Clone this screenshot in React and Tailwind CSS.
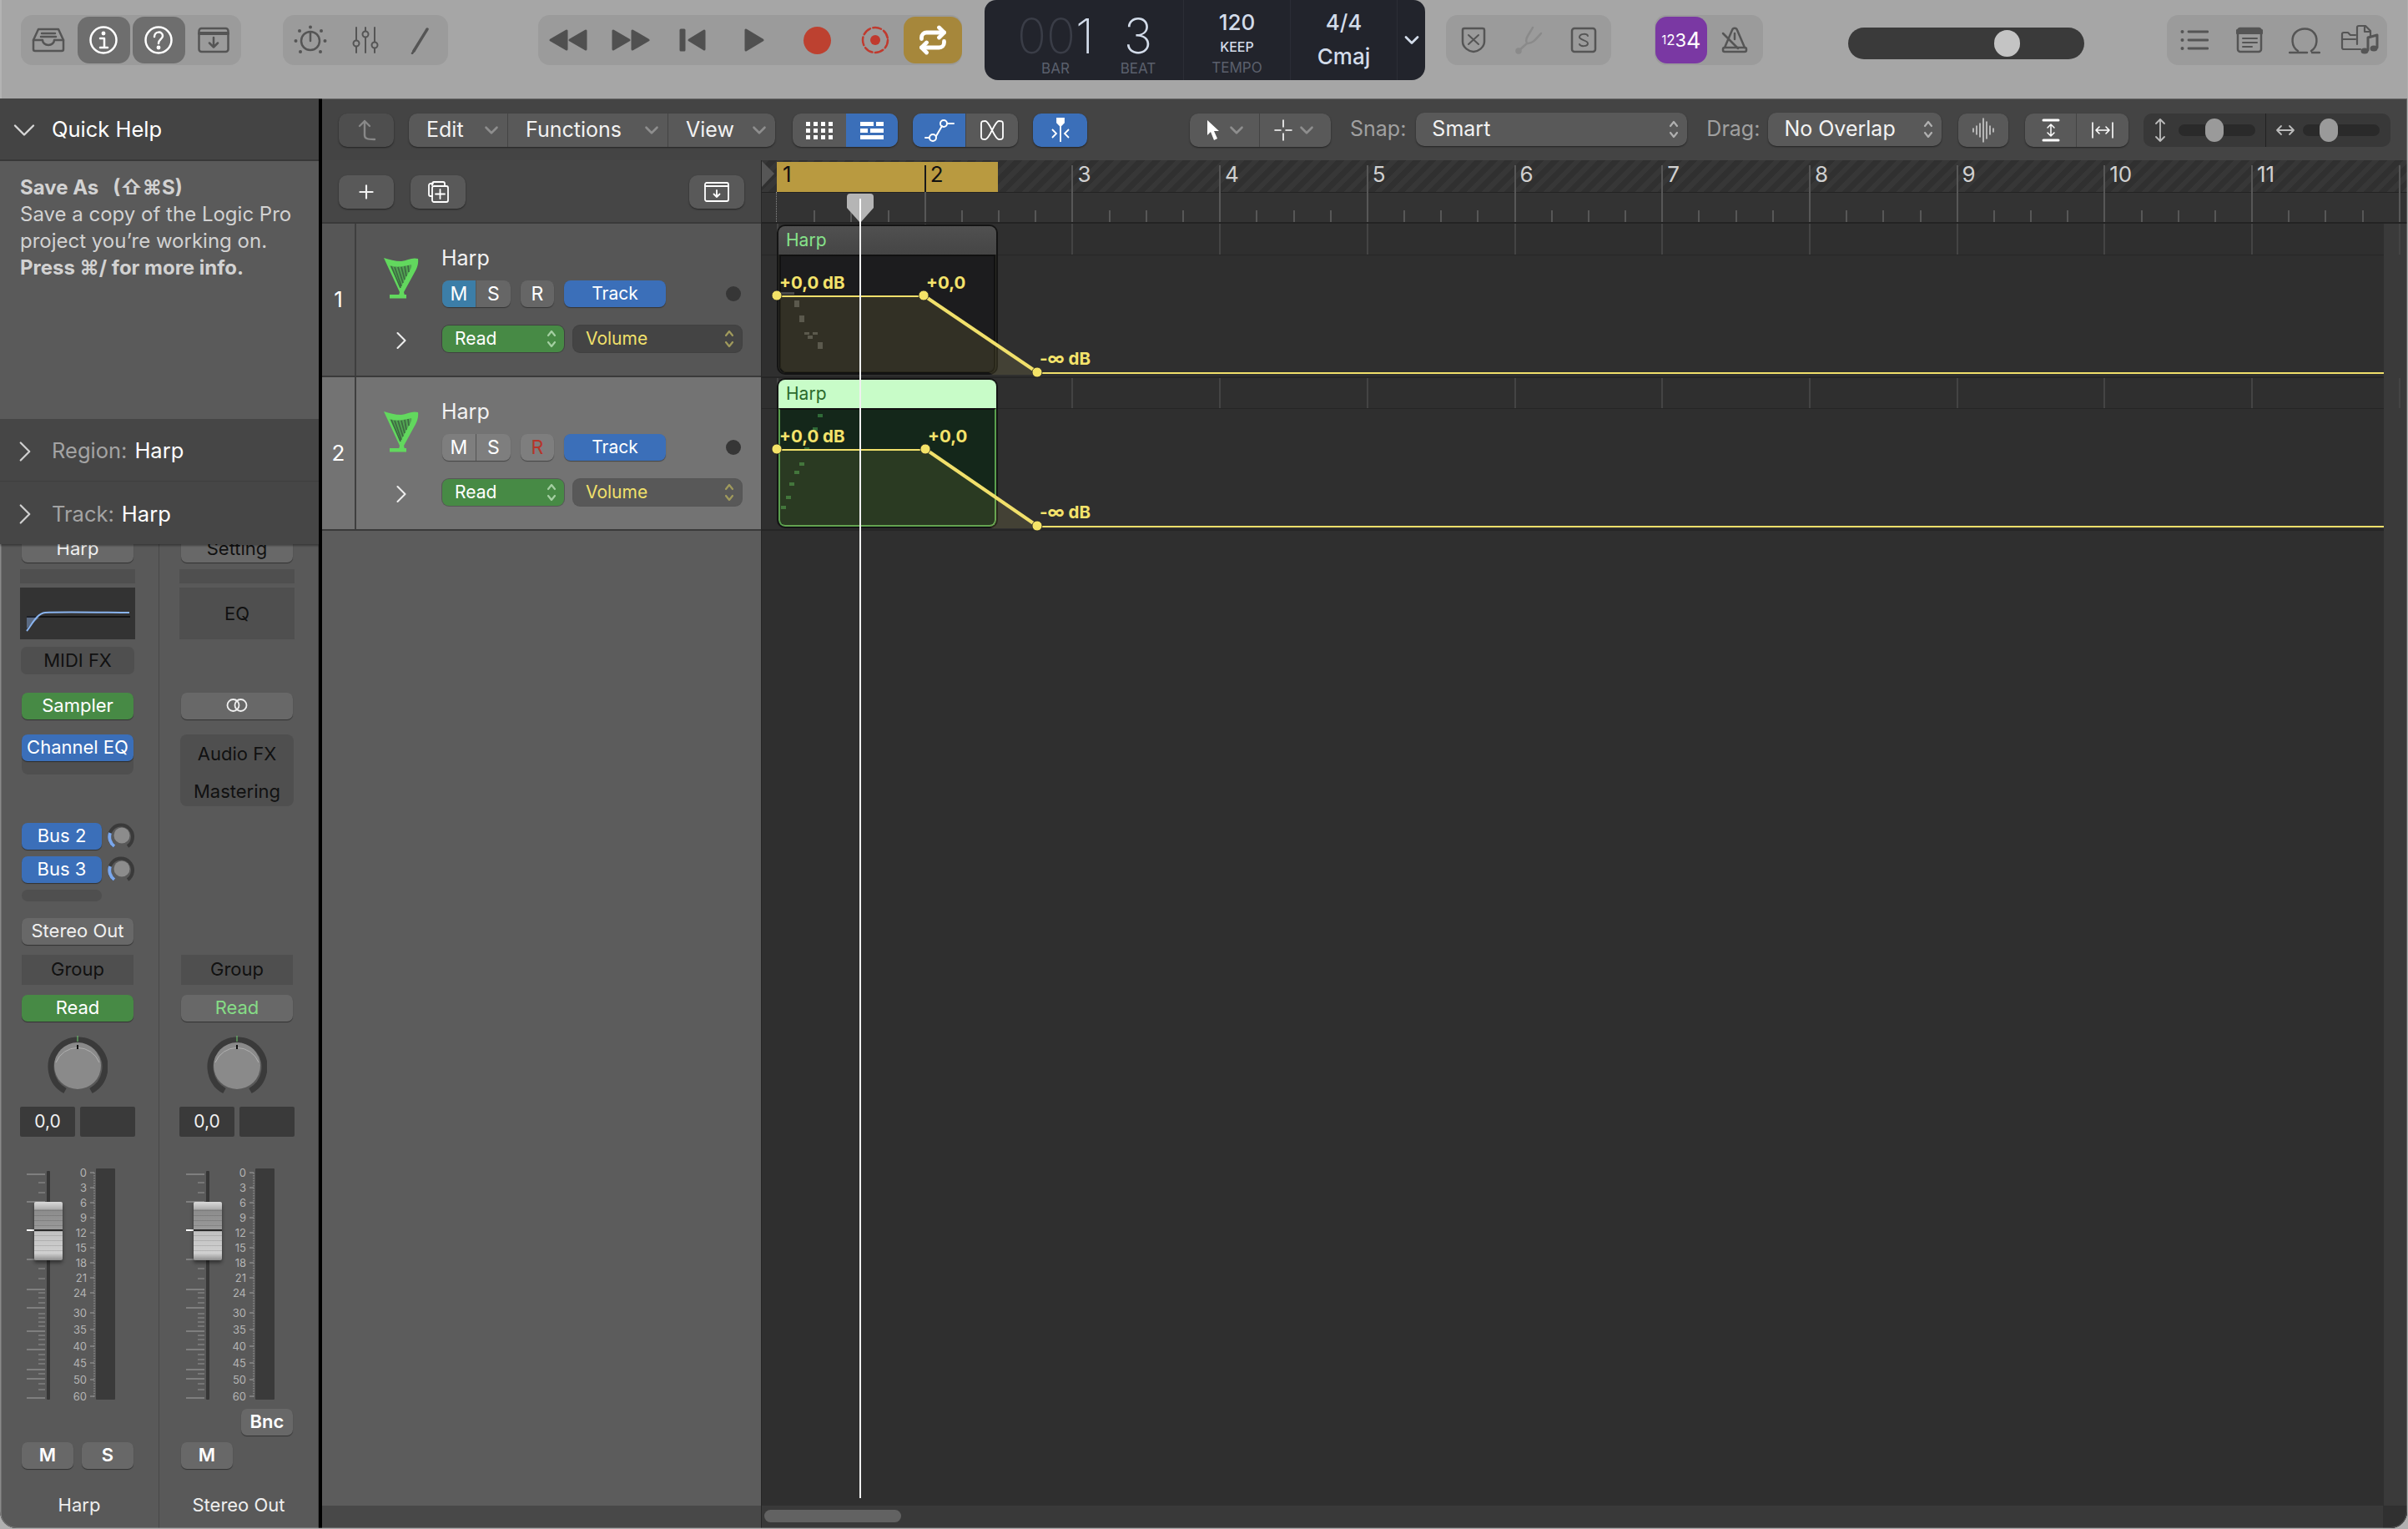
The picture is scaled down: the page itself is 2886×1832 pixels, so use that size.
import React from "react";
import { ChevronDown, ChevronRight, Plus, Repeat } from "lucide-react";

// Bar lines on the timeline, in page pixels
const BAR_X = (n) => 931 + (n - 1) * 176.7;
const BARS = [1, 2, 3, 4, 5, 6, 7, 8, 9, 10, 11, 12];
const DB_MARKS = [
  ["0", 5], ["3", 23], ["6", 41], ["9", 59], ["12", 77], ["15", 95], ["18", 113], ["21", 131],
  ["24", 149], ["30", 173], ["35", 193], ["40", 213], ["45", 233], ["50", 253], ["60", 273],
];
const FADER_LONG = [7, 40, 109, 145, 167, 195, 217, 241, 252, 275];
const FADER_SHORT = [17, 29, 120, 132, 149, 155, 161, 174, 179, 184, 189, 200, 205, 211, 223, 229, 234, 246, 258, 265];

function Ico({ w = 36, h = 32, vb, children, color = "#555", sw = 2.5 }) {
  return (
    <svg width={w} height={h} viewBox={vb || `0 0 ${w} ${h}`} fill="none" stroke={color} strokeWidth={sw} strokeLinecap="round" strokeLinejoin="round">
      {children}
    </svg>
  );
}

function Group({ className, children }) {
  return <div className={`flex h-[60px] items-center rounded-[14px] bg-[#9b9b9b] ${className}`}>{children}</div>;
}

function TopBtn({ active, children, className = "w-[66px]" }) {
  return (
    <div className={`flex h-[60px] items-center justify-center ${className}`}>
      <div className={`flex h-[56px] w-[63px] items-center justify-center rounded-[14px] ${active ? "bg-[#6e6e6e]" : ""}`}>{children}</div>
    </div>
  );
}

function TitleBar() {
  return (
    <div className="flex h-[118px] shrink-0 bg-[#a6a6a6] pt-[18px]">
      <Group className="ml-[25px] w-[264px]">
        <TopBtn>
          <Ico w={40} h={32}>
            <path d="M8 3H32L38 16V27a2 2 0 0 1-2 2H4a2 2 0 0 1-2-2V16Z" />
            <path d="M2 16H13a7 6 0 0 0 14 0H38M12 8H28M11 12H29" />
          </Ico>
        </TopBtn>
        <TopBtn active>
          <Ico w={36} h={36} color="#fff">
            <circle cx="18" cy="18" r="15.5" />
            <path d="M14 16H19V27M14 27H23" />
            <circle cx="18" cy="10" r="1.2" fill="#fff" />
          </Ico>
        </TopBtn>
        <TopBtn active>
          <Ico w={36} h={36} color="#fff">
            <circle cx="18" cy="18" r="15.5" />
            <path d="M13 14c0-7 10-7 10-1 0 4-5 4-5 9" />
            <circle cx="18" cy="27" r="1.2" fill="#fff" />
          </Ico>
        </TopBtn>
        <TopBtn>
          <Ico w={38} h={32}>
            <rect x="1.5" y="2" width="35" height="28" rx="3" />
            <path d="M2 8H36" strokeWidth="4" />
            <path d="M19 13V24M14 19.5L19 24.5L24 19.5" />
          </Ico>
        </TopBtn>
      </Group>
      <Group className="ml-[50px] w-[198px]">
        <TopBtn>
          <Ico w={40} h={36}>
            <circle cx="20" cy="19" r="11" />
            <path d="M20 19V10" />
            <g fill="#555" stroke="none">
              <circle cx="20" cy="2.5" r="2" /><circle cx="7" cy="7" r="2" /><circle cx="33" cy="7" r="2" />
              <circle cx="2.5" cy="19" r="2" /><circle cx="37.5" cy="19" r="2" /><circle cx="8" cy="32" r="2" /><circle cx="32" cy="32" r="2" />
            </g>
          </Ico>
        </TopBtn>
        <TopBtn>
          <Ico w={32} h={34} sw={2}>
            <path d="M5 2V17M5 25V32M16 2V6M16 14V32M27 2V19M27 27V32" />
            <circle cx="5" cy="21" r="3.5" /><circle cx="16" cy="10" r="3.5" /><circle cx="27" cy="23" r="3.5" />
          </Ico>
        </TopBtn>
        <TopBtn>
          <Ico w={28} h={34} sw={2.5}>
            <path d="M22 4L6 30" strokeWidth="3.5" />
            <path d="M6 30L4 33" />
          </Ico>
        </TopBtn>
      </Group>
      <Group className="ml-[108px] w-[508px]">
        <TopBtn className="w-[71px]">
          <svg width="48" height="28" viewBox="0 0 48 28" fill="#505050" stroke="#505050" strokeWidth="3" strokeLinejoin="round"><path d="M22 3V25L3 14Z" /><path d="M45 3V25L26 14Z" /></svg>
        </TopBtn>
        <TopBtn className="w-[80px]">
          <svg width="48" height="28" viewBox="0 0 48 28" fill="#505050" stroke="#505050" strokeWidth="3" strokeLinejoin="round"><path d="M3 3V25L22 14Z" /><path d="M26 3V25L45 14Z" /></svg>
        </TopBtn>
        <TopBtn className="w-[68px]">
          <svg width="34" height="28" viewBox="0 0 34 28" fill="#505050" stroke="#505050" strokeWidth="3" strokeLinejoin="round"><path d="M31 3V25L13 14Z" /><path d="M3 2H7V26H3Z" /></svg>
        </TopBtn>
        <TopBtn className="w-[79px]">
          <svg width="26" height="30" viewBox="0 0 26 30" fill="#505050" stroke="#505050" strokeWidth="3" strokeLinejoin="round"><path d="M3 3V27L23 15Z" /></svg>
        </TopBtn>
        <TopBtn className="w-[72px]">
          <div className="h-[33px] w-[33px] rounded-full bg-[#bd4130]" />
        </TopBtn>
        <TopBtn className="w-[68px]">
          <Ico w={34} h={34} color="#c03a2e" sw={2.5}>
            <circle cx="17" cy="17" r="15" strokeDasharray="10 3.5" />
            <circle cx="17" cy="17" r="6" fill="#c03a2e" stroke="none" />
          </Ico>
        </TopBtn>
        <div className="flex h-[56px] w-[70px] items-center justify-center rounded-[14px] bg-[#a6873b]">
          <Repeat size={36} color="#fff" strokeWidth={3.2} />
        </div>
      </Group>
      <Lcd />
      <Group className="ml-[25px] w-[198px]">
        <TopBtn>
          <Ico w={30} h={32}>
            <path d="M2 4a2 2 0 0 1 2-2H26a2 2 0 0 1 2 2V18C28 25 20 30 15 30S2 25 2 18Z" />
            <path d="M9 10L21 21M21 10L9 21" strokeWidth="2" />
          </Ico>
        </TopBtn>
        <TopBtn>
          <Ico w={34} h={36} color="#8a8a8a" sw={2.5}>
            <path d="M5 31L15 22M15 22C12 17 17 12 22 3M15 22C21 23 26 17 32 10" />
            <circle cx="5" cy="31" r="2.5" fill="#8a8a8a" />
          </Ico>
        </TopBtn>
        <TopBtn>
          <Ico w={32} h={32}>
            <rect x="2" y="2" width="28" height="28" rx="3" />
            <path d="M21 11c-1-3-9-3-10 1s10 4 10 8-9 4-10 1" strokeWidth="2" />
          </Ico>
        </TopBtn>
      </Group>
      <Group className="ml-[52px] w-[130px]">
        <div className="ml-[1px] flex h-[56px] w-[62px] items-center justify-center rounded-[14px] bg-[#7a38a3] text-white">
          <span className="text-[14px] leading-none">1</span>
          <span className="text-[17px] leading-none">2</span>
          <span className="text-[22px] leading-none">3</span>
          <span className="text-[27px] leading-none">4</span>
        </div>
        <TopBtn>
          <Ico w={32} h={34} sw={2.5}>
            <path d="M4 26L13 5C14 2 18 2 19 5L28 26" />
            <path d="M2 9L20 27" />
            <rect x="2" y="26" width="28" height="5" rx="2" />
            <path d="M16 9V16" />
          </Ico>
        </TopBtn>
      </Group>
      <div className="ml-[102px] mt-[15px] flex h-[38px] w-[283px] items-center rounded-full bg-[#3a3a3a]">
        <div className="ml-[175px] h-[32px] w-[31px] rounded-full bg-[#c4c4c4]" />
      </div>
      <Group className="ml-[99px] w-[264px]">
        <TopBtn>
          <Ico w={34} h={26}>
            <path d="M10 3H33M10 13H33M10 23H33" strokeWidth="2.8" />
            <g fill="#555" stroke="none"><circle cx="2.5" cy="3" r="2" /><circle cx="2.5" cy="13" r="2" /><circle cx="2.5" cy="23" r="2" /></g>
          </Ico>
        </TopBtn>
        <TopBtn>
          <Ico w={32} h={32}>
            <rect x="2" y="2" width="28" height="28" rx="3" />
            <path d="M2 6H30" strokeWidth="6" />
            <path d="M8 14H25M8 19H25M8 24H19" strokeWidth="2" />
          </Ico>
        </TopBtn>
        <TopBtn>
          <Ico w={38} h={34}>
            <path d="M11 30C3 25 3 13 8 8C14 2 25 2 30 8C35 13 35 25 27 30" />
            <path d="M1 32H22M28 32H37" />
          </Ico>
        </TopBtn>
        <TopBtn>
          <Ico w={46} h={38} sw={2.2}>
            <path d="M24 30H4a2 2 0 0 1-2-2V12a2 2 0 0 1 2-2H9l3 3h6M2 18H18" />
            <path d="M20 24V4a2 2 0 0 1 2-2h8l6 6v6M29 2V9H36" />
            <g stroke="#555" strokeWidth="3"><path d="M33 31V16L44 13V28" /></g>
            <g fill="#555" stroke="none"><ellipse cx="29" cy="32" rx="4.5" ry="3.5" /><ellipse cx="40" cy="29" rx="4.5" ry="3.5" /></g>
          </Ico>
        </TopBtn>
      </Group>
    </div>
  );
}

function Lcd() {
  return (
    <div className="-mt-[18px] ml-[27px] flex h-[96px] w-[528px] rounded-b-[16px] rounded-t-[14px] bg-[#22242c] text-[#d3dcea]">
      <div className="flex w-[239px] border-r border-[#2b2d36] pl-[26px]">
        <div className="w-[118px] text-center">
          <div className="mt-[13px] h-[56px] whitespace-nowrap text-[58px] font-extralight leading-[60px]">
            <span className="text-[#3a3d47]">00</span>1
          </div>
          <div className="mt-[3px] text-[17px] leading-[20px] text-[#5b606d]">BAR</div>
        </div>
        <div className="w-[80px] text-center">
          <div className="mt-[13px] h-[56px] text-[58px] font-extralight leading-[60px]">3</div>
          <div className="mt-[3px] text-[17px] leading-[20px] text-[#5b606d]">BEAT</div>
        </div>
      </div>
      <div className="flex w-[128px] flex-col items-center border-r border-[#2b2d36]">
        <div className="mt-[12px] text-[26px] font-medium leading-[30px]">120</div>
        <div className="mt-[1px] text-[16px] font-medium leading-[26px]">KEEP</div>
        <div className="text-[17px] leading-[24px] text-[#5b606d]">TEMPO</div>
      </div>
      <div className="flex w-[128px] flex-col items-center border-r border-[#2b2d36]">
        <div className="mt-[12px] text-[26px] font-medium leading-[30px]">4/4</div>
        <div className="mt-[11px] text-[26px] font-medium leading-[30px]">Cmaj</div>
      </div>
      <div className="flex flex-1 items-center justify-center">
        <ChevronDown size={28} strokeWidth={2.4} />
      </div>
    </div>
  );
}

function ToolBtn({ className = "", tone = "bg-[#595959]", children }) {
  return (
    <div className={`flex h-[40px] items-center justify-center rounded-[10px] text-[#f2f2f2] shadow-[0_1px_2px_rgba(0,0,0,0.5)] ${tone} ${className}`}>
      {children}
    </div>
  );
}

function MenuSeg({ label, className }) {
  return (
    <div className={`flex h-full items-center justify-between pl-[21px] pr-[6px] ${className}`}>
      <span>{label}</span>
      <ChevronDown size={26} strokeWidth={2.4} color="#8e8e8e" />
    </div>
  );
}

function Updown({ color = "#b0b0b0", className = "" }) {
  return (
    <svg className={className} width="12" height="24" viewBox="0 0 12 24" fill="none" stroke={color} strokeWidth="2.2" strokeLinecap="round" strokeLinejoin="round">
      <path d="M2 8L6 3L10 8M2 16L6 21L10 16" />
    </svg>
  );
}

function Popup({ label, className }) {
  return (
    <div className={`-mt-[3px] flex h-[40px] items-center justify-between rounded-[10px] bg-[#595959] pl-[19px] pr-[10px] text-[25px] text-[#f2f2f2] shadow-[0_1px_2px_rgba(0,0,0,0.5)] ${className}`}>
      <span>{label}</span>
      <Updown />
    </div>
  );
}

function Toolbar() {
  return (
    <div className="flex h-[74px] shrink-0 items-center bg-[#444444] pt-[2px] text-[25px]">
      <ToolBtn className="ml-[20px] w-[66px]" tone="bg-[#4e4e4e]">
        <Ico w={24} h={28} color="#888" sw={2.4}>
          <path d="M4 9L10 3L16 9M10 3V20C10 24 13 25 22 25" />
        </Ico>
      </ToolBtn>
      <ToolBtn className="ml-[18px] w-[439px]">
        <MenuSeg label="Edit" className="w-[119px] border-r border-[#444]" />
        <MenuSeg label="Functions" className="w-[192px] border-r border-[#444]" />
        <MenuSeg label="View" className="w-[128px]" />
      </ToolBtn>
      <ToolBtn className="ml-[21px] w-[126px] overflow-hidden">
        <div className="flex h-full w-[64px] items-center justify-center">
          <div className="grid grid-cols-4 gap-x-[4px] gap-y-[3px]">
            {Array.from({ length: 12 }, (_, i) => <div key={i} className="h-[5px] w-[5px] bg-white" />)}
          </div>
        </div>
        <div className="flex h-full w-[62px] flex-col items-center justify-center gap-[3px] bg-[#3b6fb9]">
          <div className="flex w-[28px] gap-[3px]"><div className="h-[5px] w-[16px] bg-white" /><div className="h-[5px] w-[9px] bg-white" /></div>
          <div className="flex w-[28px] gap-[3px]"><div className="h-[5px] w-[9px] bg-white" /><div className="h-[5px] w-[16px] bg-white" /></div>
          <div className="h-[5px] w-[28px] bg-white" />
        </div>
      </ToolBtn>
      <ToolBtn className="ml-[18px] w-[126px] overflow-hidden">
        <div className="flex h-full w-[63px] items-center justify-center bg-[#3b6fb9]">
          <Ico w={36} h={28} color="#fff" sw={2}>
            <path d="M1 23H6M14 21L21 9M27 6H35" />
            <circle cx="10" cy="23" r="4" /><circle cx="23" cy="6" r="4" />
          </Ico>
        </div>
        <div className="flex h-full w-[63px] items-center justify-center border-l border-[#444]">
          <Ico w={30} h={28} color="#fff" sw={1.8}>
            <path d="M2 6C2 3 4 3 7 3C12 3 18 25 23 25C26 25 28 25 28 22V6C28 3 26 3 23 3C18 3 12 25 7 25C4 25 2 25 2 22Z" />
          </Ico>
        </div>
      </ToolBtn>
      <ToolBtn className="ml-[18px] w-[65px]" tone="bg-[#3b6fb9]">
        <svg width="24" height="30" viewBox="0 0 24 30" fill="none" stroke="#fff" strokeWidth="1.8">
          <path d="M8 1H16V6L12 10L8 6Z" fill="#fff" />
          <path d="M12 8V29M2 14L7 19L2 24M22 14L17 19L22 24" />
        </svg>
      </ToolBtn>
      <ToolBtn className="ml-[123px] w-[169px]">
        <div className="flex h-full w-[84px] items-center justify-center gap-[6px] border-r border-[#444] pl-[4px]">
          <svg width="18" height="26" viewBox="0 0 18 26"><path d="M2 1V19L6 15L10 25L14 23L10 14H16Z" fill="#fff" /></svg>
          <ChevronDown size={26} strokeWidth={2.4} color="#8e8e8e" />
        </div>
        <div className="flex h-full w-[85px] items-center justify-center gap-[4px]">
          <Ico w={22} h={26} color="#fff" sw={1.6}><path d="M11 1V9M11 17V25M1 13H8M14 13H21" /></Ico>
          <ChevronDown size={26} strokeWidth={2.4} color="#8e8e8e" />
        </div>
      </ToolBtn>
      <span className="-mt-[3px] ml-[23px] text-[#a0a0a0]">Snap:</span>
      <Popup label="Smart" className="ml-[12px] w-[325px]" />
      <span className="-mt-[3px] ml-[23px] text-[#a0a0a0]">Drag:</span>
      <Popup label="No Overlap" className="ml-[10px] w-[208px]" />
      <ToolBtn className="ml-[20px] w-[60px]">
        <Ico w={28} h={30} color="#ddd" sw={1.4}>
          <path d="M2 13V17M6 10V20M10 7V23M14 1V29M18 5V25M22 10V20M26 13V17" />
        </Ico>
      </ToolBtn>
      <ToolBtn className="ml-[20px] w-[124px]">
        <div className="flex h-full w-[62px] items-center justify-center border-r border-[#444]">
          <Ico w={22} h={28} color="#fff" sw={1.8}>
            <path d="M2 2H20M2 26H20" strokeWidth="3" />
            <path d="M11 8V20M7 11L11 7L15 11M7 17L11 21L15 17" strokeWidth="1.5" />
          </Ico>
        </div>
        <div className="flex h-full w-[62px] items-center justify-center">
          <Ico w={28} h={22} color="#fff" sw={1.6}>
            <path d="M2 2V20M26 2V20M6 11H22M10 7L6 11L10 15M18 7L22 11L18 15" />
          </Ico>
        </div>
      </ToolBtn>
      <div className="ml-[18px] flex h-[40px] w-[296px] items-center rounded-[10px] bg-[#383838]">
        <div className="flex h-full w-[147px] items-center border-r border-[#222] pl-[12px]">
          <Ico w={16} h={30} color="#bbb" sw={1.8}><path d="M8 2V28M3 7L8 2L13 7M3 23L8 28L13 23" /></Ico>
          <div className="ml-[14px] flex h-[14px] w-[92px] items-center rounded-full bg-[#2a2a2a]">
            <div className="ml-[32px] h-[28px] w-[22px] rounded-full bg-[#9a9a9a]" />
          </div>
        </div>
        <div className="flex h-full flex-1 items-center pl-[11px]">
          <Ico w={24} h={16} color="#bbb" sw={1.8}><path d="M2 8H22M7 3L2 8L7 13M17 3L22 8L17 13" /></Ico>
          <div className="ml-[9px] flex h-[14px] w-[92px] items-center rounded-full bg-[#2a2a2a]">
            <div className="ml-[20px] h-[28px] w-[22px] rounded-full bg-[#9a9a9a]" />
          </div>
        </div>
      </div>
    </div>
  );
}

function HarpIcon() {
  return (
    <svg width="42" height="52" viewBox="0 0 42 52" fill="none">
      <path d="M0 1C7 3 13 5 21 5C28 4 34 0 41 2C42 9 39 15 36 20L24 42L25 46H18L19 42Z" fill="#62d85e" />
      <path d="M7 10C12 12 22 12 33 9C34 12 32 15 29 20L20 37Z" fill="#52a552" />
      <path d="M9 11L20 37M13 12L21 35M17 12L23 31M21 12L25 27M25 11L27 23M29 10L30 18" stroke="#3d6b42" strokeWidth="1.7" />
      <rect x="7" y="45" width="20" height="4.5" fill="#62d85e" />
    </svg>
  );
}

function TrackRow({ n, selected }) {
  const seg = selected ? "bg-[#7e7e7e]" : "bg-[#666666]";
  return (
    <div className={`flex h-[184px] shrink-0 border-b-2 border-[#3a3a3a] ${selected ? "bg-[#737373]" : "bg-[#565656]"}`}>
      <div className="flex w-[41px] items-center justify-center border-r-2 border-[#3f3f3f] pb-[2px] text-[26px] text-white">{n}</div>
      <div className="ml-[2px] flex w-[100px] flex-col items-center pl-[3px] pt-[40px]">
        <HarpIcon />
        <ChevronRight className="mt-[30px]" size={36} color="#eee" strokeWidth={1.4} />
      </div>
      <div className="flex-1">
        <div className="pt-[26px] text-[25px] leading-[30px] text-[#f2f2f2]">Harp</div>
        <div className="ml-[1px] mt-[12px] flex text-[23px] text-white">
          <div className={`flex h-[32px] w-[82px] overflow-hidden rounded-[8px] shadow-[0_1px_1px_rgba(0,0,0,0.4)] ${seg}`}>
            <div className={`flex w-[41px] items-center justify-center border-r border-[#555] ${selected ? "" : "bg-[#3c7ea8]"}`}>M</div>
            <div className="flex flex-1 items-center justify-center">S</div>
          </div>
          <div className={`ml-[12px] flex h-[32px] w-[40px] items-center justify-center rounded-[8px] shadow-[0_1px_1px_rgba(0,0,0,0.4)] ${seg} ${selected ? "text-[#b5352a]" : ""}`}>R</div>
          <div className="ml-[12px] flex h-[32px] w-[122px] items-center justify-center rounded-[8px] bg-[#3b6fb9] text-[21px] shadow-[0_1px_1px_rgba(0,0,0,0.4)]">Track</div>
          <div className="ml-[72px] mt-[7px] h-[18px] w-[18px] rounded-full bg-[#363636]" />
        </div>
        <div className="ml-[1px] mt-[22px] flex text-[21px]">
          <div className="flex h-[32px] w-[146px] items-center justify-between rounded-[8px] bg-[#478a45] pl-[15px] pr-[9px] text-white shadow-[0_0_0_1px_rgba(0,0,0,0.25)]">
            <span>Read</span><Updown color="#a4cfa2" />
          </div>
          <div className={`ml-[11px] flex h-[32px] w-[202px] items-center justify-between rounded-[8px] pl-[15px] pr-[9px] text-[#f1e06b] shadow-[0_0_0_1px_rgba(0,0,0,0.25)] ${selected ? "bg-[#585858]" : "bg-[#444444]"}`}>
            <span>Volume</span><Updown color="#a09a5c" />
          </div>
        </div>
      </div>
    </div>
  );
}

function TrackList() {
  return (
    <div className="flex w-[527px] shrink-0 flex-col border-r border-[#262626] bg-[#5c5c5c]">
      <div className="flex h-[76px] shrink-0 items-center border-b-2 border-[#3a3a3a] bg-[#464646] px-[20px] pt-[2px] text-white">
        <ToolBtn className="w-[66px]"><Plus size={26} strokeWidth={2} /></ToolBtn>
        <ToolBtn className="ml-[20px] w-[66px]">
          <Ico w={28} h={28} color="#fff" sw={1.8}>
            <path d="M8 4H5a2 2 0 0 0-2 2V17a2 2 0 0 0 2 2H7M7 6V4a2 2 0 0 1 2-2H20a2 2 0 0 1 2 2V7" />
            <rect x="7" y="7" width="19" height="19" rx="2" />
            <path d="M16.5 11V22M11 16.5H22" />
          </Ico>
        </ToolBtn>
        <ToolBtn className="ml-auto w-[66px]">
          <Ico w={32} h={26} color="#fff" sw={1.8}>
            <rect x="2" y="2" width="28" height="22" rx="2" />
            <path d="M2 6H30M16 11V19M12.5 15.5L16 19L19.5 15.5" />
          </Ico>
        </ToolBtn>
      </div>
      <TrackRow n="1" />
      <TrackRow n="2" selected />
      <div className="flex-1" />
      <div className="h-[27px] shrink-0 bg-[#484848]" />
    </div>
  );
}

function Ruler() {
  return (
    <div className="relative h-[76px] shrink-0 bg-[#333333]">
      {/* upper band */}
      <div className="absolute inset-x-0 top-0 h-[39px] border-b border-[#232323] bg-[repeating-linear-gradient(135deg,#373737_0,#373737_6px,#303030_6px,#303030_13px)]" />
      <div className="absolute left-[18px] top-[2px] flex h-[36px] w-[265px] bg-[#b99a40]" />
      <svg className="absolute left-0 top-[1px]" width="16" height="32" viewBox="0 0 16 32"><path d="M0 0L15 15L0 31Z" fill="#565656" /></svg>
      {BARS.map((n) => (
        <React.Fragment key={n}>
          <div className={`absolute top-[6px] h-[70px] w-[2px] ${n === 1 ? "hidden" : "bg-[#575757]"}`} style={{ left: BAR_X(n) - 913 }} />
          {n === 2 && <div className="absolute top-[6px] h-[32px] w-[2px] bg-[#1a1a1a]" style={{ left: BAR_X(n) - 913 }} />}
          {[1, 2, 3].map((q) => (
            <div key={q} className="absolute top-[60px] h-[16px] w-[2px] bg-[#575757]" style={{ left: BAR_X(n) - 913 + q * 44.2 }} />
          ))}
          <span className={`absolute top-[1px] text-[26px] leading-[32px] ${n <= 2 ? "text-[#111]" : "text-[#d0d0d0]"}`} style={{ left: BAR_X(n) - 913 + (n === 1 ? 7 : 7) }}>
            {n === 12 ? "" : n}
          </span>
        </React.Fragment>
      ))}
      <div className="absolute bottom-0 left-[17px] top-[38px] w-0 border-l border-dotted border-[#8a8a8a]" />
      <div className="absolute inset-x-0 bottom-0 h-[2px] bg-[#232323]" />
    </div>
  );
}

function Region({ selected, className }) {
  return (
    <div className={`absolute left-[18px] h-[180px] w-[265px] overflow-hidden rounded-[10px] border-2 border-[#141414] ${selected ? "bg-[#14271a]" : "bg-[#2a2a24]"} ${className}`}>
      <div className={`flex h-[34px] items-center pl-[9px] text-[21px] ${selected ? "bg-[#c8fcc8] text-[#2c6a2c]" : "bg-[linear-gradient(#505050,#454545)] text-[#86e28a]"}`}>Harp</div>
      <div className={`h-[142px] rounded-b-[8px] border-2 border-t-[#111] ${selected ? "border-[#5a9f4e] bg-[#14271a]" : "mx-[1px] border-[#111] bg-[#1c1c1e]"}`} />
    </div>
  );
}

const NOTES_GREY = [[936, 350, 8, 3], [944, 350, 8, 3], [952, 360, 6, 8], [958, 378, 6, 8], [964, 398, 6, 3], [968, 402, 6, 4], [974, 398, 6, 3], [980, 410, 6, 8]];
const NOTES_GREEN = [[980, 496, 6, 4], [974, 512, 6, 4], [964, 536, 6, 3], [958, 554, 6, 4], [952, 564, 6, 4], [946, 578, 6, 4], [942, 594, 6, 4], [936, 606, 6, 4]];

function Automation() {
  const dot = "#f1e06b";
  return (
    <svg className="absolute left-0 top-0" width="1944" height="1535" viewBox="913 268 1944 1535" fill="none">
      {NOTES_GREY.map(([x, y, w, h], i) => <rect key={i} x={x} y={y} width={w} height={h} fill="#4a4a4a" />)}
      {NOTES_GREEN.map(([x, y, w, h], i) => <rect key={i} x={x} y={y} width={w} height={h} fill="#2f6a37" />)}
      <path d="M935 355H1107L1243 446V449H1190L1185 446H940L935 441Z" fill="#f1e06b" fillOpacity="0.1" />
      <path d="M935 539H1109L1243 630V633H1190L1185 630H940L935 625Z" fill="#f1e06b" fillOpacity="0.1" />
      <path d="M931 355H1107" stroke={dot} strokeWidth="2" />
      <path d="M1107 354L1243 446" stroke={dot} strokeWidth="4" />
      <path d="M1243 447H2857" stroke={dot} strokeWidth="2" />
      <path d="M931 539H1109" stroke={dot} strokeWidth="2" />
      <path d="M1109 538L1243 630" stroke={dot} strokeWidth="4" />
      <path d="M1243 631H2857" stroke={dot} strokeWidth="2" />
      {[[931, 354], [1107, 354], [1243, 446], [931, 538], [1109, 538], [1243, 630]].map(([x, y]) => (
        <circle key={`${x}-${y}`} cx={x} cy={y} r="6" fill="#f4e367" stroke="#222" strokeWidth="0.8" />
      ))}
    </svg>
  );
}

function AutoLabel({ className, children }) {
  return <span className={`absolute text-[20.5px] font-bold leading-[24px] text-[#f4e36b] ${className}`}>{children}</span>;
}

function Lanes() {
  return (
    <div className="relative flex-1 bg-[#2f2f2f]">
      <div className="absolute inset-x-0 top-[37px] h-[1px] bg-[#262626]" />
      <div className="absolute inset-x-0 top-[183px] h-[2px] bg-[#262626]" />
      <div className="absolute inset-x-0 top-[221px] h-[1px] bg-[#262626]" />
      <div className="absolute inset-x-0 top-[366px] h-[2px] bg-[#262626]" />
      {BARS.map((n) => (
        <React.Fragment key={n}>
          <div className="absolute top-0 h-[37px] w-[2px] bg-[#444]" style={{ left: BAR_X(n) - 913 }} />
          <div className="absolute top-[185px] h-[36px] w-[2px] bg-[#444]" style={{ left: BAR_X(n) - 913 }} />
        </React.Fragment>
      ))}
      <Region className="top-[1px]" />
      <Region selected className="top-[185px]" />
      <Automation />
      <AutoLabel className="left-[21px] top-[59px]">+0,0 dB</AutoLabel>
      <AutoLabel className="left-[197px] top-[59px]">+0,0</AutoLabel>
      <AutoLabel className="left-[333px] top-[150px]">-∞ dB</AutoLabel>
      <AutoLabel className="left-[21px] top-[243px]">+0,0 dB</AutoLabel>
      <AutoLabel className="left-[199px] top-[243px]">+0,0</AutoLabel>
      <AutoLabel className="left-[333px] top-[334px]">-∞ dB</AutoLabel>
    </div>
  );
}

function Arrange() {
  return (
    <div className="relative flex min-w-0 flex-1 flex-col">
      <Ruler />
      <div className="flex flex-1">
        <Lanes />
        <div className="w-[28px] shrink-0 bg-[#3a3a3a]" />
      </div>
      <div className="flex h-[27px] shrink-0 bg-[#393939]">
        <div className="ml-[3px] mt-[5px] h-[15px] w-[164px] rounded-full bg-[#626262]" />
        <div className="ml-auto h-full w-[29px] bg-[#303030]" />
      </div>
      {/* playhead */}
      <div className="absolute left-[117px] top-[46px] h-[1557px] w-[2px] bg-[#f0f0f0]" />
      <svg className="absolute left-[101px] top-[40px]" width="34" height="36" viewBox="0 0 34 36">
        <path d="M5 0H29a4 4 0 0 1 4 4V17L17 35L1 17V4a4 4 0 0 1 4-4Z" fill="#b5b5b5" />
        <path d="M17 6V36" stroke="#fff" strokeWidth="2" />
      </svg>
    </div>
  );
}

function StripBtn({ className = "", children }) {
  return (
    <div className={`ml-[26px] flex h-[32px] shrink-0 items-center justify-center rounded-[7px] pb-[2px] text-[22px] shadow-[0_1px_1px_rgba(0,0,0,0.45)] ${className}`}>{children}</div>
  );
}

function SendKnob({ frac }) {
  return (
    <svg className="ml-[7px]" width="32" height="32" viewBox="0 0 32 32" fill="none">
      <path d="M8 28A14 14 0 1 1 24 28" stroke="#3a3a3a" strokeWidth="4" />
      <path d="M8 28A14 14 0 0 1 3 12" stroke="#7aa7ec" strokeWidth="4" strokeDasharray={frac} />
      <circle cx="17" cy="15" r="9.5" fill="#8c8c8c" />
    </svg>
  );
}

function PanKnob() {
  return (
    <svg className="mx-auto block" width="72" height="71" viewBox="0 0 72 71" fill="none">
      <path d="M21 66A32.5 32.5 0 1 1 52 66" stroke="#3a3a3a" strokeWidth="7" />
      <path d="M36 0V7" stroke="#6fce6f" strokeWidth="1" />
      <circle cx="36" cy="36" r="28" fill="#8a8a8a" />
      <path d="M10 32A28 28 0 0 1 62 32" stroke="#b0b0b0" strokeWidth="1" />
      <path d="M36 11V16" stroke="#111" strokeWidth="2" />
    </svg>
  );
}

function FaderBlock() {
  return (
    <div className="relative mt-[38px] h-[277px] w-[140px] shrink-0">
      <svg className="absolute left-0 top-0" width="140" height="277" viewBox="0 0 140 277" fill="none">
        {FADER_LONG.map((y) => <path key={y} d={`M32 ${y}H54`} stroke="#9a9a9a" strokeWidth="1.2" />)}
        {FADER_SHORT.map((y) => <path key={y} d={`M46 ${y}H54`} stroke="#8a8a8a" strokeWidth="1.2" />)}
        <path d="M32 74H41" stroke="#fff" strokeWidth="2" />
        <rect x="56" y="3" width="4" height="274" rx="1" fill="#363636" />
        {DB_MARKS.map(([l, y]) => <path key={l} d={`M108 ${y}H113`} stroke="#a0a0a0" strokeWidth="1" />)}
        <path d="M113 5V275" stroke="#a0a0a0" strokeWidth="1" strokeDasharray="1.5 1.5" />
        <rect x="115" y="0" width="23" height="277" rx="1" fill="#3a3a3a" />
      </svg>
      {DB_MARKS.map(([l, y]) => (
        <span key={l} className="absolute right-[36px] text-[13px] leading-[14px] text-[#b4b4b4]" style={{ top: y - 7 }}>{l}</span>
      ))}
      <div className="absolute left-[41px] top-[40px] h-[70px] w-[34px] rounded-[2px] bg-[linear-gradient(#dadada,#b0b0b0_12%,#8c8c8c_14%,#9a9a9a_47%,#8a8a8a_49%,#c2c2c2_52%,#cfcfcf_88%,#8e8e8e)] shadow-[0_3px_4px_rgba(0,0,0,0.45)]">
        <div className="absolute inset-x-0 bottom-[8px] top-[10px] bg-[repeating-linear-gradient(rgba(0,0,0,0.12)_0,rgba(0,0,0,0.12)_1px,transparent_1px,transparent_6px)]" />
        <div className="absolute inset-x-0 top-[33px] h-[2px] bg-[#2a2a2a]" />
      </div>
    </div>
  );
}

function Strip({ name, setting, stereo }) {
  const slot = "ml-[24px] w-[138px] shrink-0";
  const dim = "bg-[#4f4f4f] text-[#111] text-[22px]";
  return (
    <div className="flex w-[191px] shrink-0 flex-col border-r border-[#484848]">
      <StripBtn className={`-mt-[10px] w-[134px] bg-[#686868] ${stereo ? "text-[#111]" : "text-[#f0f0f0]"}`}>{setting}</StripBtn>
      <div className={`mt-[8px] h-[17px] bg-[#4f4f4f] ${slot}`} />
      {stereo ? (
        <div className={`mt-[5px] flex h-[62px] items-center justify-center bg-[#4f4f4f] text-[22px] text-[#111] ${slot}`}>EQ</div>
      ) : (
        <div className={`mt-[5px] h-[62px] bg-[#333] ${slot}`}>
          <svg width="138" height="62" viewBox="0 0 138 62" fill="none">
            <path d="M8 49L25 34H8Z" fill="#5a6a82" />
            <path d="M8 35H132" stroke="#0a0a0a" strokeWidth="1.5" />
            <path d="M8 52C14 45 20 31 30 30C50 29 110 30 131 30" stroke="#8ab4ef" strokeWidth="2" />
          </svg>
        </div>
      )}
      {stereo ? (
        <div className="mt-[9px] h-[33px] shrink-0" />
      ) : (
        <div className={`ml-[25px] mt-[9px] flex h-[33px] w-[136px] shrink-0 items-center justify-center rounded-[7px] ${dim}`}>MIDI FX</div>
      )}
      {stereo ? (
        <StripBtn className="mt-[22px] w-[134px] bg-[#686868]">
          <Ico w={28} h={18} color="#f0f0f0" sw={1.8}><circle cx="9.5" cy="9" r="7" /><circle cx="18.5" cy="9" r="7" /></Ico>
        </StripBtn>
      ) : (
        <StripBtn className="mt-[22px] w-[134px] bg-[#478a45] text-white">Sampler</StripBtn>
      )}
      {stereo ? (
        <div className="ml-[25px] mt-[18px] flex h-[86px] w-[136px] shrink-0 flex-col items-center gap-[21px] rounded-[8px] bg-[#4f4f4f] pt-[11px] text-[22px] leading-[24px] text-[#111]">
          <span>Audio FX</span>
          <span>Mastering</span>
        </div>
      ) : (
        <div className="ml-[26px] mt-[18px] h-[48px] w-[134px] shrink-0 rounded-[8px] bg-[#4f4f4f]">
          <div className="flex h-[32px] items-center justify-center rounded-[7px] bg-[#3b6fb9] pb-[2px] text-[22px] text-white shadow-[0_1px_1px_rgba(0,0,0,0.45)]">Channel EQ</div>
        </div>
      )}
      {stereo ? (
        <div className="h-[114px] shrink-0" />
      ) : (
        <div className="mt-[58px] h-[94px] shrink-0">
          <div className="flex items-center">
            <StripBtn className="w-[96px] bg-[#3b6fb9] text-white">Bus 2</StripBtn>
            <SendKnob frac="30 60" />
          </div>
          <div className="mt-[8px] flex items-center">
            <StripBtn className="w-[96px] bg-[#3b6fb9] text-white">Bus 3</StripBtn>
            <SendKnob frac="18 60" />
          </div>
          <div className="ml-[26px] mt-[8px] h-[14px] w-[96px] rounded-full bg-[#4f4f4f]" />
        </div>
      )}
      {stereo ? (
        <div className="mt-[20px] h-[32px] shrink-0" />
      ) : (
        <StripBtn className="mt-[20px] w-[134px] bg-[#686868] text-[#f0f0f0]">Stereo Out</StripBtn>
      )}
      <div className={`ml-[26px] mt-[12px] flex h-[36px] w-[134px] shrink-0 items-center justify-center pb-[1px] ${dim}`}>Group</div>
      <StripBtn className={`mt-[12px] w-[134px] ${stereo ? "bg-[#686868] text-[#86dc86]" : "bg-[#478a45] text-white"}`}>Read</StripBtn>
      <div className="mt-[17px] h-[71px] w-[186px] shrink-0"><PanKnob /></div>
      <div className="ml-[24px] mt-[14px] flex h-[36px] w-[138px] shrink-0 gap-[6px]">
        <div className="flex w-[66px] items-center justify-center rounded-[2px] bg-[#3a3a3a] text-[21px] text-[#f0f0f0]">0,0</div>
        <div className="w-[66px] rounded-[2px] bg-[#3a3a3a]" />
      </div>
      <FaderBlock />
      {stereo ? (
        <StripBtn className="ml-[98px] mt-[11px] w-[62px] bg-[#686868] font-semibold text-white">Bnc</StripBtn>
      ) : (
        <div className="mt-[11px] h-[32px] shrink-0" />
      )}
      <div className="mt-[8px] flex">
        <StripBtn className="w-[62px] bg-[#686868] font-semibold text-white">M</StripBtn>
        {!stereo && <StripBtn className="!ml-[10px] w-[62px] bg-[#686868] font-semibold text-white">S</StripBtn>}
      </div>
      <div className="mt-[27px] h-[32px] shrink-0 text-center text-[22px] leading-[32px] text-[#eeeeee]">{name}</div>
    </div>
  );
}

function InspectorRow({ label, value, className = "" }) {
  return (
    <div className={`flex h-[75px] shrink-0 items-center pl-[9px] pt-[3px] text-[25.5px] ${className}`}>
      <ChevronRight size={42} color="#cfcfcf" strokeWidth={1.3} />
      <span className="ml-[11px] text-[#a3a3a3]">{label}</span>
      <span className="ml-[9px] text-white">{value}</span>
    </div>
  );
}

function LeftPanel() {
  return (
    <div className="flex w-[382px] shrink-0 flex-col overflow-hidden bg-[#595959]">
      <div className="relative z-10 shrink-0 shadow-[0_2px_2px_rgba(0,0,0,0.35)]">
        <div className="flex h-[75px] items-center border-b-2 border-[#383838] bg-[#444444] pl-[7px] pt-[2px] text-[25.5px] text-white">
          <ChevronDown size={44} color="#d8d8d8" strokeWidth={1.3} />
          <span className="ml-[11px]">Quick Help</span>
        </div>
        <div className="h-[309px] bg-[#5a5a5a] pl-[24px] pt-[16px] text-[24px] leading-[32px] text-[#d2d2d2]">
          <div className="font-bold">Save As &nbsp; (⇧⌘S)</div>
          <div>Save a copy of the Logic Pro</div>
          <div>project you’re working on.</div>
          <div className="font-bold">Press ⌘/ for more info.</div>
        </div>
        <InspectorRow label="Region:" value="Harp" className="border-b border-[#3e3e3e] bg-[#464646]" />
        <InspectorRow label="Track:" value="Harp" className="bg-[#464646]" />
      </div>
      <div className="flex flex-1">
        <Strip name="Harp" setting="Harp" />
        <Strip name="Stereo Out" setting="Setting" stereo />
      </div>
    </div>
  );
}

export default function App() {
  return (
    <div className="h-[1832px] w-[2886px] overflow-hidden bg-[#b0b0b0] font-['Inter',sans-serif]">
      <div className="relative flex h-[1831px] w-[2885px] flex-col overflow-hidden rounded-b-[20px] bg-[#2f2f2f]">
        <TitleBar />
        <div className="flex min-h-0 flex-1">
          <LeftPanel />
          <div className="w-[4px] shrink-0 bg-black" />
          <div className="flex min-w-0 flex-1 flex-col">
            <Toolbar />
            <div className="flex min-h-0 flex-1">
              <TrackList />
              <Arrange />
            </div>
          </div>
        </div>
        {/* window edge */}
        <div className="absolute inset-y-0 left-0 w-[2px] bg-white/15" />
        <div className="absolute bottom-0 left-0 right-0 top-[118px] rounded-b-[20px] shadow-[inset_0_0_0_1px_rgba(255,255,255,0.18)]" />
      </div>
    </div>
  );
}
